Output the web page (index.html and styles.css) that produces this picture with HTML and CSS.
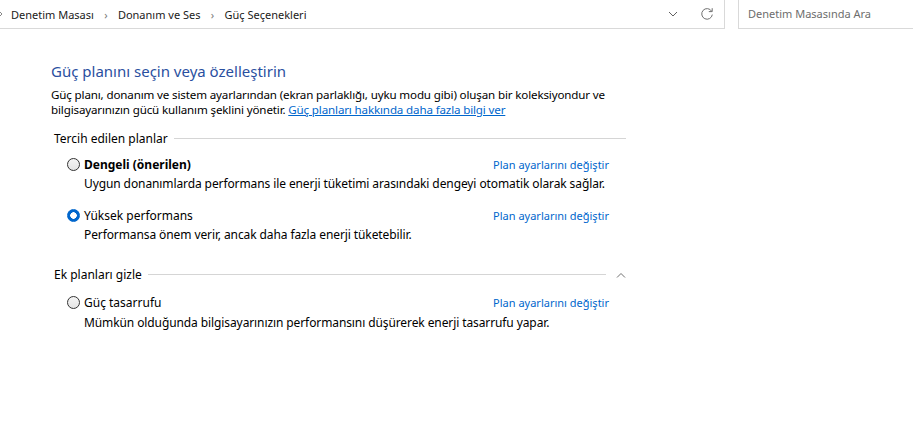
FILE: index.html
```html
<!DOCTYPE html>
<html>
<head lang="tr">
    <meta charset="UTF-8">
    <title>Güç Seçenekleri</title>
    <link rel="stylesheet" href="styles.css">
</head>
<body>
<div id="topbar">
    <div class="address">
        <svg class="crumb-lead" width="4" height="6" viewBox="0 0 4 6"><path d="M0 1 L2 3 L0 5" fill="none" stroke="#888888" stroke-width="1"/></svg>
        <span class="crumb">Denetim Masası</span>
        <span class="sep">›</span>
        <span class="crumb">Donanım ve Ses</span>
        <span class="sep">›</span>
        <span class="crumb">Güç Seçenekleri</span>
        <span class="spacer"></span>
        <svg class="dropdown" width="10" height="6" viewBox="0 0 10 6"><path d="M1 1 L5 5 L9 1" fill="none" stroke="#606060" stroke-width="1"/></svg>
        <svg class="refresh" width="14" height="14" viewBox="0 0 14 14"><path d="M11.6 4.2 A5.3 5.3 0 1 0 12.3 7.6" fill="none" stroke="#707070" stroke-width="1"/><path d="M12.2 1.2 L12.2 4.6 L8.8 4.6" fill="none" stroke="#707070" stroke-width="1"/></svg>
    </div>
    <div class="search">Denetim Masasında Ara</div>
</div>

<div id="content">
    <h1 class="title">Güç planını seçin veya özelleştirin</h1>
    <div class="intro">
        <div class="intro-line">Güç planı, donanım ve sistem ayarlarından (ekran parlaklığı, uyku modu gibi) oluşan bir koleksiyondur ve</div>
        <div class="intro-line">bilgisayarınızın gücü kullanım şeklini yönetir. <a href="#">Güç planları hakkında daha fazla bilgi ver</a></div>
    </div>

    <div class="group">
        <div class="group-head"><span>Tercih edilen planlar</span><span class="rule"></span></div>
        <div class="plan">
            <div class="plan-row">
                <span class="radio"></span>
                <span class="plan-name bold">Dengeli (önerilen)</span>
                <a class="plan-link" href="#">Plan ayarlarını değiştir</a>
            </div>
            <div class="plan-desc">Uygun donanımlarda performans ile enerji tüketimi arasındaki dengeyi otomatik olarak sağlar.</div>
        </div>
        <div class="plan">
            <div class="plan-row">
                <span class="radio checked"></span>
                <span class="plan-name">Yüksek performans</span>
                <a class="plan-link" href="#">Plan ayarlarını değiştir</a>
            </div>
            <div class="plan-desc">Performansa önem verir, ancak daha fazla enerji tüketebilir.</div>
        </div>
    </div>

    <div class="group extra">
        <div class="group-head"><span>Ek planları gizle</span><span class="rule short"></span>
            <svg class="collapse" width="10" height="6" viewBox="0 0 10 6"><path d="M1 5.5 L5 1.5 L9 5.5" fill="none" stroke="#707070" stroke-width="1"/></svg>
        </div>
        <div class="plan">
            <div class="plan-row">
                <span class="radio"></span>
                <span class="plan-name">Güç tasarrufu</span>
                <a class="plan-link" href="#">Plan ayarlarını değiştir</a>
            </div>
            <div class="plan-desc">Mümkün olduğunda bilgisayarınızın performansını düşürerek enerji tasarrufu yapar.</div>
        </div>
    </div>
</div>
</body>
</html>
```

FILE: styles.css
```css
html, body {
    margin: 0;
    padding: 0;
    background-color: #ffffff;
    color: #000000;
    font-family: "Segoe UI", "Noto Sans", sans-serif;
    font-size: 12px;
}

#topbar {
    display: flex;
    height: 29px;
}

.address {
    display: flex;
    align-items: center;
    width: 724px;
    height: 28px;
    border-right: 1px solid #d9d9d9;
    border-bottom: 1px solid #d9d9d9;
    box-sizing: content-box;
    font-size: 11px;
}

.crumb-lead {
    margin-left: 0;
    margin-right: 7px;
}

.crumb {
    color: #1a1a1a;
}

.sep {
    color: #7a7a7a;
    width: 24px;
    text-align: center;
    font-size: 11px;
}

.spacer {
    flex: 1;
}

.dropdown {
    margin-right: 22px;
}

.refresh {
    margin-right: 10px;
}

.search {
    margin-left: 13px;
    flex: 1;
    height: 28px;
    line-height: 27px;
    border-left: 1px solid #d9d9d9;
    border-bottom: 1px solid #d9d9d9;
    padding-left: 9px;
    color: #6d6d6d;
    font-size: 11px;
}

#content {
    padding: 32px 0 0 51px;
    width: 575px;
}

.title {
    margin: 0;
    font-size: 15px;
    font-weight: normal;
    color: #2a4fa0;
    line-height: 20px;
}

.intro {
    margin-top: 6px;
}

.intro-line {
    height: 15px;
    line-height: 15px;
    font-size: 11.6px;
    white-space: nowrap;
    letter-spacing: -0.15px;
}

.intro a {
    color: #0066cc;
}

.group {
    margin-top: 14px;
}

.group.extra {
    margin-top: 25px;
}

.group-head {
    display: flex;
    align-items: center;
    margin-left: 3px;
    height: 15px;
}

.rule {
    flex: 1;
    height: 1px;
    background-color: #d5d5d5;
    margin-left: 6px;
}

.rule.short {
    margin-right: 10px;
}

.plan {
    margin-left: 16px;
    margin-top: 10px;
    margin-bottom: 16px;
}

.extra .plan {
    margin-top: 12px;
}

.plan-row {
    display: flex;
    align-items: center;
    height: 17px;
}

.radio {
    width: 11px;
    height: 11px;
    border: 1px solid #333333;
    border-radius: 50%;
    background: linear-gradient(#f4f4f4, #e4e4e4);
    margin-right: 4px;
    box-sizing: content-box;
}

.radio.checked {
    border: 1px solid #0066cc;
    background: radial-gradient(circle, #ffffff 0, #ffffff 3px, #0066cc 3.5px);
}

.plan-name {
    flex: 1;
}

.bold {
    font-weight: bold;
}

.plan-link {
    color: #0066cc;
    text-decoration: none;
    font-size: 11px;
    margin-right: 17px;
}

.plan-desc {
    margin-left: 17px;
    margin-top: 3px;
    line-height: 15px;
    letter-spacing: -0.1px;
}

.extra .plan-desc {
    margin-top: 4px;
}
```
